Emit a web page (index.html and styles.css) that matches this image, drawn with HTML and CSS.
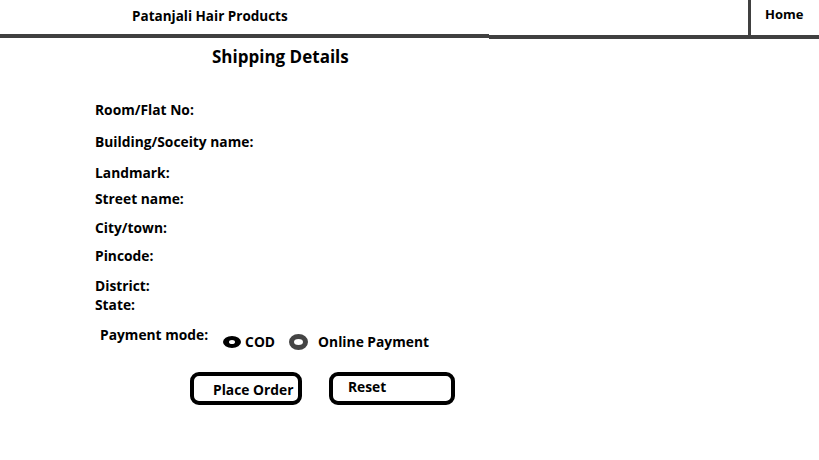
FILE: index.html
```html
<!DOCTYPE html>
<html lang="en">
<head>
<meta charset="utf-8">
<title>Shipping Details</title>
<link rel="stylesheet" href="styles.css">
</head>
<body>
<header class="topbar">
  <div class="brand-seg"><span class="brand">Patanjali Hair Products</span></div>
  <div class="nav-seg"><a class="home" href="#">Home</a></div>
</header>
<main class="page">
  <h1 class="title">Shipping Details</h1>
  <form class="form">
    <div class="field">Room/Flat No:</div>
    <div class="field gap-32">Building/Soceity name:</div>
    <div class="field gap-31">Landmark:</div>
    <div class="field gap-26">Street name:</div>
    <div class="field gap-29">City/town:</div>
    <div class="field gap-28">Pincode:</div>
    <div class="field gap-30">District:</div>
    <div class="field gap-19">State:</div>
    <div class="payment">
      <span class="payment-label">Payment mode:</span>
      <div class="options">
        <label class="option"><span class="radio radio-cod"></span>COD</label>
        <label class="option"><span class="radio radio-online"></span>Online Payment</label>
      </div>
    </div>
    <div class="actions">
      <button type="button" class="btn btn-order">Place Order</button>
      <button type="button" class="btn btn-reset">Reset</button>
    </div>
  </form>
</main>
</body>
</html>
```
FILE: styles.css
```css
html, body {
  margin: 0;
  padding: 0;
  background: #ffffff;
}
body {
  width: 819px;
  height: 460px;
  overflow: hidden;
  font-family: "Open Sans", Lato, sans-serif;
  font-weight: 700;
  color: #000000;
}
.topbar {
  display: flex;
  align-items: flex-start;
}
.brand-seg {
  box-sizing: border-box;
  width: 489px;
  height: 38px;
  border-bottom: 4px solid #404040;
  padding: 4px 0 0 132px;
}
.brand {
  font-size: 13.5px;
  line-height: 16px;
}
.nav-seg {
  box-sizing: border-box;
  flex: 1;
  height: 39px;
  border-bottom: 4px solid #404040;
  display: flex;
  justify-content: flex-end;
}
.home {
  box-sizing: border-box;
  width: 71px;
  height: 35px;
  border-left: 3px solid #404040;
  padding: 6px 0 0 14px;
  font-size: 13px;
  line-height: 16px;
  color: #000000;
  text-decoration: none;
}
.page {
  padding: 0;
}
.title {
  margin: 7px 0 0 212px;
  font-size: 17px;
  line-height: 22px;
  font-weight: 700;
}
.form {
  display: flex;
  flex-direction: column;
  align-items: flex-start;
  margin-top: 34px;
  padding-left: 95px;
  font-size: 13.8px;
  line-height: 16px;
}
.field {
  height: 16px;
}
.gap-32 { margin-top: 16px; }
.gap-31 { margin-top: 15px; }
.gap-26 { margin-top: 10px; }
.gap-29 { margin-top: 13px; }
.gap-28 { margin-top: 12px; }
.gap-30 { margin-top: 14px; }
.gap-19 { margin-top: 3px; }
.payment {
  display: flex;
  align-items: flex-start;
  margin: 14px 0 0 5px;
}
.options {
  display: flex;
  align-items: center;
  margin: 7px 0 0 15px;
}
.option {
  display: flex;
  align-items: center;
  gap: 4px;
}
.option + .option {
  margin-left: 14px;
  gap: 10px;
}
.radio {
  box-sizing: border-box;
  display: inline-block;
  border-radius: 50%;
}
.radio-cod {
  width: 18px;
  height: 12px;
  border-style: solid;
  border-color: #000000;
  border-width: 4px 6px;
}
.radio-online {
  width: 19px;
  height: 16px;
  border: 5px solid #444444;
}
.actions {
  display: flex;
  gap: 27px;
  margin: 22px 0 0 95px;
}
.btn {
  box-sizing: border-box;
  height: 33px;
  border: 4px solid #000000;
  border-radius: 9px;
  background: #ffffff;
  font-family: inherit;
  font-weight: 700;
  font-size: 13.8px;
  color: #000000;
  text-align: left;
  padding: 0;
}
.btn-order {
  width: 112px;
  padding: 2px 0 0 19px;
}
.btn-reset {
  width: 126px;
  padding: 0 0 4px 15px;
}
```
